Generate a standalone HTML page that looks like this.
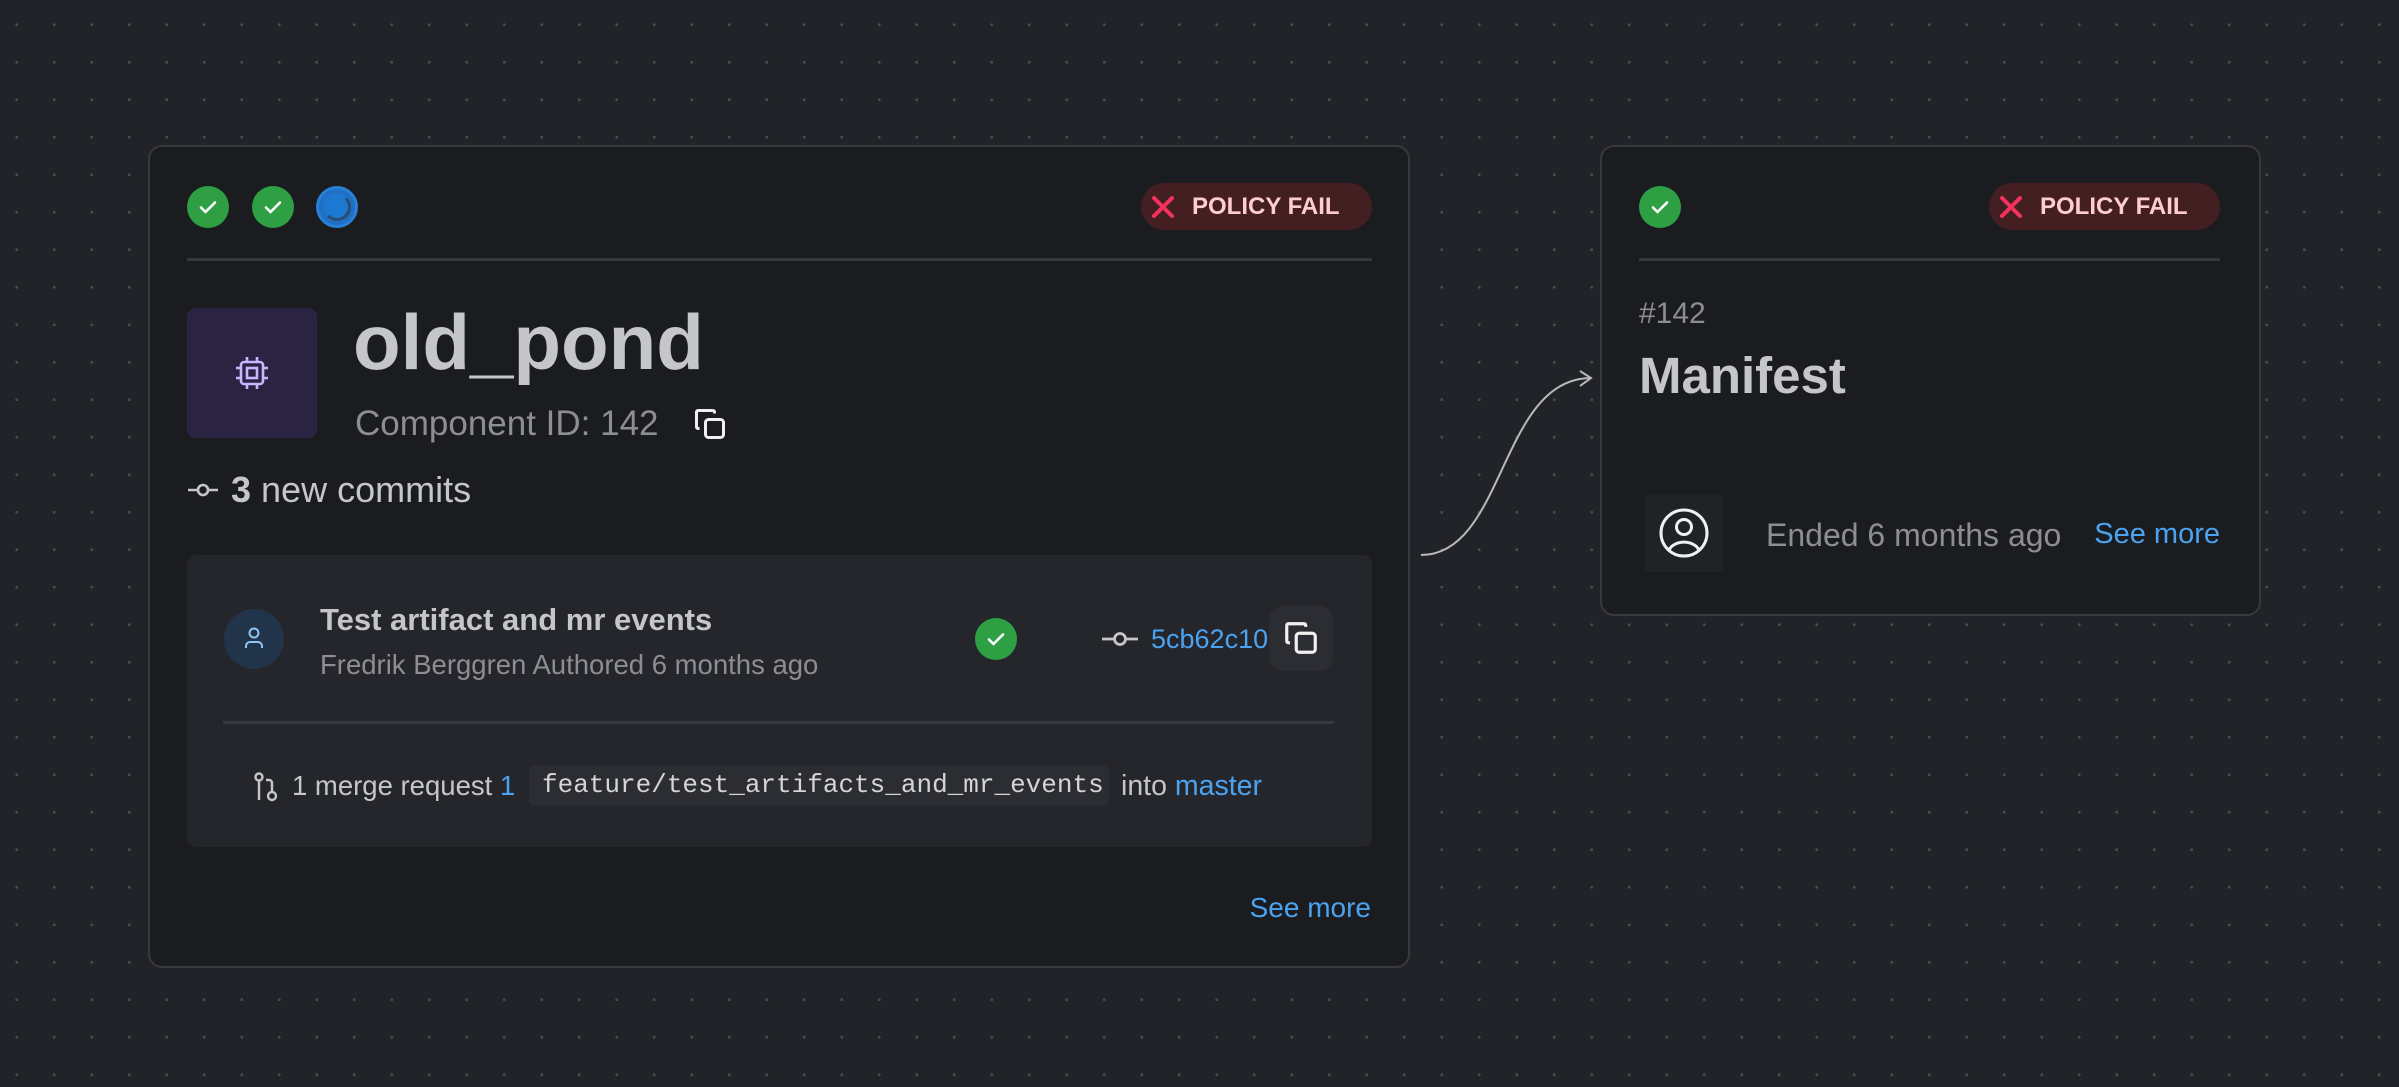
<!DOCTYPE html>
<html><head><meta charset="utf-8"><style>
*{box-sizing:border-box;margin:0;padding:0}
body{width:2399px;height:1087px;overflow:hidden;background-color:#212328;background-image:radial-gradient(circle,#4a4c52 1.3px,transparent 1.6px);background-size:37.5px 37.5px;background-position:-2px 6px;font-family:"Segoe UI","Liberation Sans",sans-serif;position:relative}
.a{position:absolute}
.card{position:absolute;background:#1b1c20;border:2px solid #38393e;border-radius:14px}
.chk{position:absolute;width:42px;height:42px;border-radius:50%;background:#2ea043}
.chk svg{position:absolute;left:9px;top:9px}
.pill{position:absolute;height:47px;border-radius:24px;background:#431f21;color:#ffcdcd;font-weight:bold;font-size:24px;line-height:47px;white-space:nowrap}
.pill svg{position:absolute;left:9px;top:11px}
.pill span{position:absolute;left:51px}
.div{position:absolute;height:3px;background:#37383d}
.t{position:absolute;white-space:nowrap;line-height:1}
.blue{color:#4ba3f0}
</style></head><body>
<svg class="a" style="left:0;top:0" width="2399" height="1087"><path d="M1421 555 C1505 555 1500 378 1591 378" fill="none" stroke="#b8b9bd" stroke-width="2"/><path d="M1580 371 L1591 378 L1580 386" fill="none" stroke="#b8b9bd" stroke-width="2"/></svg>

<div class="card" style="left:148px;top:145px;width:1262px;height:823px"></div>
<div class="chk" style="left:187px;top:186px"><svg width="24" height="24" viewBox="0 0 24 24"><path d="M5 12.5l4.5 4.5L19 7.5" fill="none" stroke="#fff" stroke-width="2.6" stroke-linecap="round" stroke-linejoin="round"/></svg></div>
<div class="chk" style="left:252px;top:186px"><svg width="24" height="24" viewBox="0 0 24 24"><path d="M5 12.5l4.5 4.5L19 7.5" fill="none" stroke="#fff" stroke-width="2.6" stroke-linecap="round" stroke-linejoin="round"/></svg></div>
<div class="a" style="left:316px;top:186px;width:42px;height:42px;border-radius:50%;background:#1f6fc5;border:3px solid #2a7fd6"><div class="a" style="left:4px;top:4px;width:28px;height:28px;border-radius:50%;background:#1c78d0;border:3px solid #2a4d72;border-top-color:#1c78d0;border-left-color:#1c78d0"></div></div>
<div class="pill" style="left:1141px;top:183px;width:231px"><svg width="26" height="26" viewBox="0 0 26 26"><path d="M4 4L22 22M22 4L4 22" stroke="#f5325c" stroke-width="4" stroke-linecap="round"/></svg><span>POLICY FAIL</span></div>
<div class="div" style="left:187px;top:258px;width:1185px"></div>

<div class="a" style="left:187px;top:308px;width:130px;height:130px;border-radius:8px;background:#2a2342"><svg class="a" style="left:45px;top:45px" width="40" height="40" viewBox="0 0 40 40" fill="none" stroke="#c9b6ff" stroke-width="2.6"><rect x="9" y="9" width="22" height="22" rx="3"/><rect x="15" y="15" width="10" height="10"/><path d="M15 4v5M25 4v5M15 31v5M25 31v5M4 15h5M4 25h5M31 15h5M31 25h5"/></svg></div>
<div class="t" style="left:353px;top:303px;font-size:78px;font-weight:bold;color:#c5c6ca">old_pond</div>
<div class="t" style="left:355px;top:406px;font-size:35px;color:#8d8e93">Component ID: 142</div>
<svg class="a" style="left:692px;top:406px" width="36" height="36" viewBox="0 0 24 24" fill="none" stroke="#f0f0f0" stroke-width="2"><rect x="9" y="9" width="12" height="12" rx="2"/><path d="M5 15H4a1 1 0 0 1-1-1V4a1 1 0 0 1 1-1h10a1 1 0 0 1 1 1v1"/></svg>
<svg class="a" style="left:186px;top:479px" width="34" height="22" viewBox="0 0 34 22" fill="none" stroke="#c5c6ca" stroke-width="2.6"><circle cx="17" cy="11" r="5"/><path d="M2 11h10M22 11h10"/></svg>
<div class="t" style="left:231px;top:472px;font-size:36px;color:#c5c6ca"><b>3</b> new commits</div>

<div class="a" style="left:187px;top:555px;width:1185px;height:292px;border-radius:9px;background:#25262b"></div>
<div class="a" style="left:224px;top:609px;width:60px;height:60px;border-radius:50%;background:#223449"><svg class="a" style="left:18px;top:17px" width="24" height="26" viewBox="0 0 24 26" fill="none" stroke="#8fc6f5" stroke-width="2"><circle cx="12" cy="7" r="4.5"/><path d="M4 22v-2a4 4 0 0 1 4-4h8a4 4 0 0 1 4 4v2"/></svg></div>
<div class="t" style="left:320px;top:604px;font-size:31px;font-weight:bold;color:#c5c6ca">Test artifact and mr events</div>
<div class="t" style="left:320px;top:651px;font-size:27.5px;color:#8d8e93">Fredrik Berggren Authored 6 months ago</div>
<div class="chk" style="left:975px;top:618px"><svg width="24" height="24" viewBox="0 0 24 24"><path d="M5 12.5l4.5 4.5L19 7.5" fill="none" stroke="#fff" stroke-width="2.6" stroke-linecap="round" stroke-linejoin="round"/></svg></div>
<svg class="a" style="left:1101px;top:628px" width="38" height="22" viewBox="0 0 38 22" fill="none" stroke="#c5c6ca" stroke-width="2.8"><circle cx="19" cy="11" r="5.5"/><path d="M1 11h12M25 11h12"/></svg>
<div class="t blue" style="left:1151px;top:626px;font-size:27px">5cb62c10</div>
<div class="a" style="left:1269px;top:606px;width:64px;height:65px;border-radius:14px;background:#2c2d32"><svg class="a" style="left:13px;top:13px" width="38" height="38" viewBox="0 0 24 24" fill="none" stroke="#f0f0f0" stroke-width="2"><rect x="9" y="9" width="12" height="12" rx="2"/><path d="M5 15H4a1 1 0 0 1-1-1V4a1 1 0 0 1 1-1h10a1 1 0 0 1 1 1v1"/></svg></div>
<div class="div" style="left:223px;top:721px;width:1111px"></div>
<svg class="a" style="left:253px;top:772px" width="26" height="30" viewBox="0 0 26 30" fill="none" stroke="#c5c6ca" stroke-width="2.4"><circle cx="6" cy="5" r="3.5"/><path d="M6 9v19"/><circle cx="19" cy="24" r="4"/><path d="M19 20v-9a3 3 0 0 0-3-3h-3"/></svg>
<div class="t" style="left:292px;top:772px;font-size:27.5px;color:#c5c6ca">1 merge request <span class="blue">1</span></div>
<div class="a" style="left:529px;top:765px;width:580px;height:41px;border-radius:6px;background:#2c2d32"></div>
<div class="t" style="left:542px;top:772px;font-size:26px;font-family:'Liberation Mono',monospace;color:#d4d5d8">feature/test_artifacts_and_mr_events</div>
<div class="t" style="left:1121px;top:772px;font-size:28.5px;color:#c5c6ca">into <span class="blue">master</span></div>
<div class="t blue" style="right:1028px;top:894px;font-size:28px">See more</div>

<div class="card" style="left:1600px;top:145px;width:661px;height:471px"></div>
<div class="chk" style="left:1639px;top:186px"><svg width="24" height="24" viewBox="0 0 24 24"><path d="M5 12.5l4.5 4.5L19 7.5" fill="none" stroke="#fff" stroke-width="2.6" stroke-linecap="round" stroke-linejoin="round"/></svg></div>
<div class="pill" style="left:1989px;top:183px;width:231px"><svg width="26" height="26" viewBox="0 0 26 26"><path d="M4 4L22 22M22 4L4 22" stroke="#f5325c" stroke-width="4" stroke-linecap="round"/></svg><span>POLICY FAIL</span></div>
<div class="div" style="left:1639px;top:258px;width:581px"></div>
<div class="t" style="left:1639px;top:299px;font-size:30px;color:#8d8e93">#142</div>
<div class="t" style="left:1639px;top:350px;font-size:51px;font-weight:bold;color:#c5c6ca">Manifest</div>
<div class="a" style="left:1645px;top:494px;width:78px;height:78px;border-radius:4px;background:#202326"><svg class="a" style="left:13px;top:13px" width="52" height="52" viewBox="0 0 52 52" fill="none" stroke="#f0f0f0" stroke-width="3"><circle cx="26" cy="26" r="23"/><circle cx="26" cy="20" r="7.5"/><path d="M11 43a16 12 0 0 1 30 0"/></svg></div>
<div class="t" style="left:1766px;top:519px;font-size:32px;color:#8d8e93">Ended 6 months ago</div>
<div class="t blue" style="right:179px;top:520px;font-size:29px">See more</div>
</body></html>
